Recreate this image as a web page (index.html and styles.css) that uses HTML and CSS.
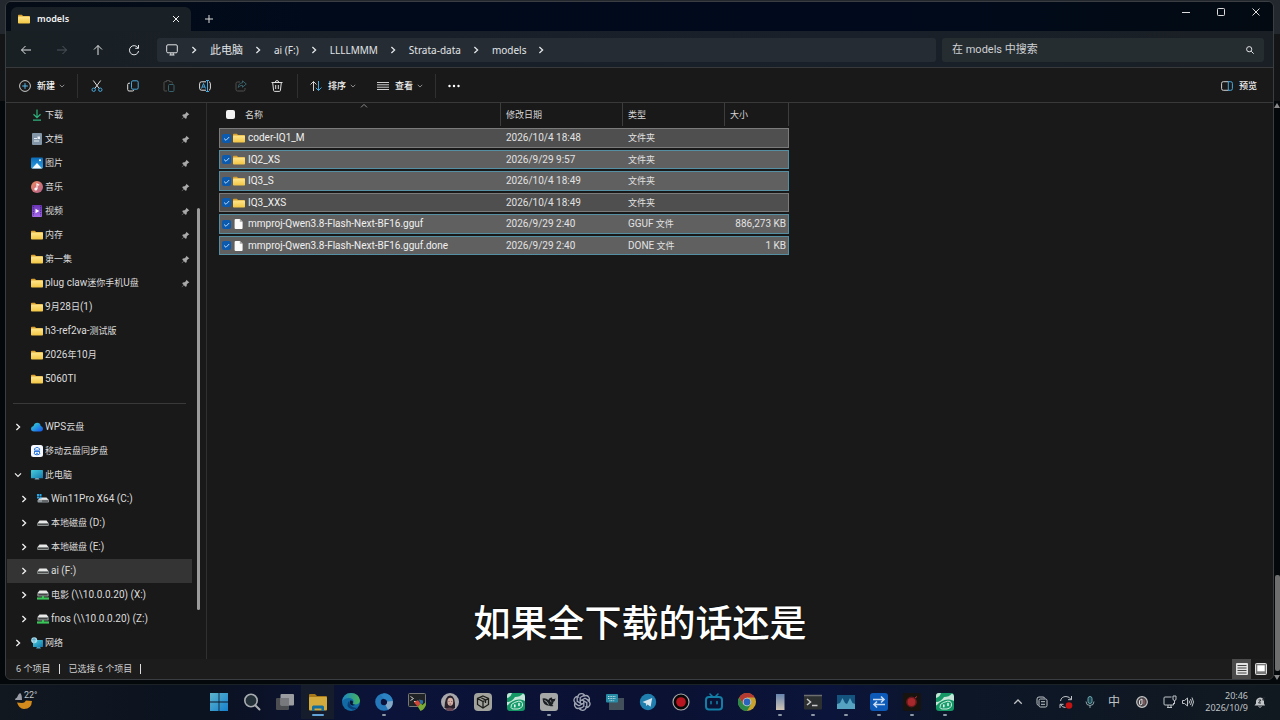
FILE: index.html
```html
<!DOCTYPE html>
<html lang="zh-CN">
<head>
<meta charset="utf-8">
<title>models</title>
<link rel="stylesheet" href="styles.css">
</head>
<body>
<svg class="defs" aria-hidden="true">
  <defs>
    <linearGradient id="gFolder" x1="0" y1="0" x2="0" y2="1"><stop offset="0" stop-color="#ffe58a"/><stop offset="1" stop-color="#f2c543"/></linearGradient>
    <linearGradient id="gPic" x1="0" y1="0" x2="0" y2="1"><stop offset="0" stop-color="#0d6cb8"/><stop offset="1" stop-color="#2a9fe4"/></linearGradient>
    <linearGradient id="gMusic" x1="0" y1="0" x2="1" y2="1"><stop offset="0" stop-color="#ee8a62"/><stop offset="1" stop-color="#b4608c"/></linearGradient>
    <linearGradient id="gVideo" x1="0" y1="0" x2="0" y2="1"><stop offset="0" stop-color="#6a35b5"/><stop offset="1" stop-color="#a56bea"/></linearGradient>
    <linearGradient id="gCloud" x1="0" y1="0" x2="1" y2="1"><stop offset="0" stop-color="#38dcd0"/><stop offset="1" stop-color="#1550ee"/></linearGradient>
    <linearGradient id="gPc" x1="0" y1="0" x2="1" y2="1"><stop offset="0" stop-color="#46cfdc"/><stop offset="1" stop-color="#1477ad"/></linearGradient>
    <linearGradient id="gWin" x1="0" y1="0" x2="1" y2="1"><stop offset="0" stop-color="#5eb4cc"/><stop offset="1" stop-color="#1580cc"/></linearGradient>
    <linearGradient id="gEdge" x1="0" y1="0" x2="1" y2="0"><stop offset="0" stop-color="#1b86c4"/><stop offset="1" stop-color="#46b45c"/></linearGradient>
    <linearGradient id="gPhone" x1="0" y1="0" x2="0" y2="1"><stop offset="0" stop-color="#6784ae"/><stop offset="1" stop-color="#d0c4b4"/></linearGradient>
  </defs>
  <symbol id="folder" viewBox="0 0 12 12"><path d="M0 2.500q0-.8.8-.8h3l1.300 1.200h6q.9 0 .9.8v1H0z" fill="#d9a02c"/><rect y="3.600" width="12" height="7" rx=".8" fill="url(#gFolder)"/></symbol>
  <symbol id="file" viewBox="0 0 12 12"><path d="M2.600 1h4.200l2.800 2.800V10q0 1-1 1h-6q-1 0-1-1V2q0-1 1-1z" fill="#fafafa"/><path d="M6.800 1v2.800h2.800z" fill="#a8a8a8"/></symbol>
  <symbol id="chev" viewBox="0 0 8 8"><path d="M2.400 1 5.600 4 2.400 7" fill="none" stroke="currentColor" stroke-width="1.300"/></symbol>
  <symbol id="chevd" viewBox="0 0 8 8"><path d="M1 2.400 4 5.400 7 2.400" fill="none" stroke="currentColor" stroke-width="1.200"/></symbol>
  <symbol id="chevu" viewBox="0 0 8 8"><path d="M1 5.400 4 2.400 7 5.400" fill="none" stroke="currentColor" stroke-width="1"/></symbol>
  <symbol id="pin" viewBox="0 0 10 10"><path d="M6 .8 9.300 4l-1.400.5-1.500 1.600-.1 2L4.800 8.600 3.300 7 1 9.200.8 9 3 6.700 1.500 5.200 2 3.800l2-.1L5.600 2.200z" fill="#a9a9a9"/></symbol>
  <symbol id="drive" viewBox="0 0 12 12"><path d="M2.500 3.500h7l2.300 3H.2z" fill="#e8e8e8"/><rect x=".2" y="6.200" width="11.600" height="2.800" rx=".8" fill="#8f9495"/><path d="M1 7.400h10" stroke="#303030" stroke-width=".8"/></symbol>
  <symbol id="netdrive" viewBox="0 0 12 12"><path d="M2.500 1.500h7l2 2.500H.5z" fill="#e8e8e8"/><rect x=".3" y="4" width="11.400" height="3.500" rx=".8" fill="#8f9495"/><path d="M1.500 5.800h9" stroke="#222" stroke-width="1"/><path d="M0 9.500h12" stroke="#3bc459" stroke-width="2.200"/><path d="M6 7v2.500" stroke="#3bc459" stroke-width="2"/></symbol>
  <symbol id="robot" viewBox="0 0 18 18"><rect width="18" height="18" rx="3" fill="#149765"/><path d="M0 3Q0 0 3 0h2Q4 4 0 5zM8 4q5 0 8-3.500 2 .8 2 3V8q-3-2-6-1.500Q5 7 1 12l-1 .5V9q5 0 8-5z" fill="#c3e6d8"/><path d="M4 14.500q-.8-3.500 3.500-5l4-1.300q3.300-.8 4 2.300.6 3-1.800 4.500L11 16H6.500Q4.500 16 4 14.500z" fill="#199e6d" stroke="#d4eee3"/><path d="M7.800 12v1.800M12 10.600v1.800" stroke="#e4f6ee" stroke-width="1.600" stroke-linecap="round"/></symbol>
</svg>

<div class="desktop">
<main class="window">
  <header class="titlebar">
    <div class="tab"><svg class="i12"><use href="#folder"/></svg><strong>models</strong>
      <button aria-label="关闭标签"><svg class="i8" viewBox="0 0 8 8"><path d="M1 1l6 6M7 1 1 7" stroke="currentColor"/></svg></button></div>
    <button class="newtab" aria-label="新标签"><svg class="i8" viewBox="0 0 8 8"><path d="M4 0v8M0 4h8" stroke="currentColor"/></svg></button>
    <div class="controls">
      <button aria-label="最小化"><svg class="i8" viewBox="0 0 8 8"><path d="M0 4.500h8" stroke="currentColor"/></svg></button>
      <button aria-label="最大化"><svg class="i8" viewBox="0 0 8 8"><rect x=".5" y=".5" width="7" height="7" rx=".8" fill="none" stroke="currentColor"/></svg></button>
      <button aria-label="关闭"><svg class="i8" viewBox="0 0 8 8"><path d="M.5.5l7 7M7.500.5l-7 7" stroke="currentColor"/></svg></button>
    </div>
  </header>

  <div class="navbar">
    <button class="navbtn" aria-label="后退"><svg class="i12" viewBox="0 0 12 12"><path d="M11 6H1.500M5.500 2l-4 4 4 4" class="ln"/></svg></button>
    <button class="navbtn dim" aria-label="前进" disabled><svg class="i12" viewBox="0 0 12 12"><path d="M1 6h9.500M6.500 2l4 4-4 4" class="ln"/></svg></button>
    <button class="navbtn" aria-label="上一级"><svg class="i12" viewBox="0 0 12 12"><path d="M6 11V1.500M2 5.500l4-4 4 4" class="ln"/></svg></button>
    <button class="navbtn" aria-label="刷新"><svg class="i12" viewBox="0 0 12 12"><path d="M10.200 4.200A4.600 4.600 0 1 0 10.600 7M10.500 1v3.300H7.200" class="ln"/></svg></button>
    <nav class="address" aria-label="地址">
      <svg class="i12" viewBox="0 0 12 12"><rect x=".7" y=".8" width="10.600" height="8" rx="1.200" class="ln"/><path d="M3.500 11h5M4.800 9v2M7.200 9v2" class="ln"/></svg>
      <svg class="i8"><use href="#chev"/></svg><a href="#" class="zh">此电脑</a>
      <svg class="i8"><use href="#chev"/></svg><a href="#">ai (F:)</a>
      <svg class="i8"><use href="#chev"/></svg><a href="#">LLLLMMM</a>
      <svg class="i8"><use href="#chev"/></svg><a href="#">Strata-data</a>
      <svg class="i8"><use href="#chev"/></svg><a href="#">models</a>
      <svg class="i8"><use href="#chev"/></svg>
    </nav>
    <label class="search"><input type="text" placeholder="在 models 中搜索" aria-label="搜索"><svg class="i8" viewBox="0 0 8 8"><circle cx="3.200" cy="3.200" r="2.600" class="ln"/><path d="M5.200 5.200 7.700 7.700" class="ln"/></svg></label>
  </div>

  <div class="toolbar">
    <button class="cmd"><svg class="i12" viewBox="0 0 12 12"><circle cx="6" cy="6" r="5.400" class="ln"/><path d="M6 3.200v5.600M3.200 6h5.600" stroke="#58b6e8"/></svg>新建<svg class="i6"><use href="#chevd"/></svg></button>
    <span class="sep new-sep"></span>
    <button class="icon" aria-label="剪切"><svg class="i12" viewBox="0 0 12 12"><path d="M2.300.5 8.200 8.500M9.700.5 3.800 8.500" class="ln"/><circle cx="2.700" cy="9.700" r="1.700" fill="none" stroke="#4aa8dc"/><circle cx="9.300" cy="9.700" r="1.700" fill="none" stroke="#4aa8dc"/></svg></button>
    <button class="icon" aria-label="复制"><svg class="i12" viewBox="0 0 12 12"><path d="M3 3.200H2q-1.300 0-1.300 1.300v5Q.7 11 2 11h3.500q1.300 0 1.300-1" class="ln"/><rect x="4.500" y=".8" width="6.700" height="8.400" rx="1.400" fill="none" stroke="#4aa8dc"/></svg></button>
    <button class="icon dim" aria-label="粘贴" disabled><svg class="i12" viewBox="0 0 12 12"><path d="M4 11H1.800Q1 11 1 10V2.500q0-.8.8-.8H3.500V.6h3v1.100h2q.8 0 .8.8v1" class="ln"/><rect x="5.500" y="4.500" width="5.500" height="7" rx="1" fill="none" stroke="#38616b"/></svg></button>
    <button class="icon" aria-label="重命名"><svg class="i12" viewBox="0 0 12 12"><path d="M7 1.800H2.500Q.6 1.800.6 3.800v4.400q0 2 1.900 2H7M10 1.800q1.400.3 1.400 2v4.400q0 1.700-1.400 2" class="ln"/><path d="M7 .5h3M8.500.5v11M7 11.500h3M2.500 8.500l2-5 2 5M3.200 7h2.600" stroke="#4aa8dc" fill="none"/></svg></button>
    <button class="icon dim" aria-label="共享" disabled><svg class="i12" viewBox="0 0 12 12"><path d="M5 2H2.500Q1 2 1 3.500v6Q1 11 2.500 11h6q1.500 0 1.500-1.500V8" class="ln"/><path d="M7.500.8 11.300 4 7.500 7.200V5.400Q4.500 5.200 3.300 7.500 3.500 3 7.500 2.800z" fill="none" stroke="#38616b"/></svg></button>
    <button class="icon" aria-label="删除"><svg class="i12" viewBox="0 0 12 12"><path d="M.5 2.500h11M4.300 2.300q0-1.700 1.700-1.700t1.700 1.700M1.700 2.700l.9 7.800q.1.900 1 .9h4.800q.9 0 1-.9l.9-7.800M4.700 5v4M7.300 5v4" class="ln"/></svg></button>
    <span class="sep sort-sep"></span>
    <button class="cmd"><svg class="i12" viewBox="0 0 12 12"><path d="M3.500 11V1.500M.5 4.500l3-3 3 3" class="ln"/><path d="M8.500 1v9.500M5.800 7.800l2.700 2.700 3-3" fill="none" stroke="#4aa8dc"/></svg>排序<svg class="i6"><use href="#chevd"/></svg></button>
    <button class="cmd"><svg class="i12" viewBox="0 0 12 12"><path d="M0 2.500h12M0 4.800h12M0 7.200h12M0 9.500h12" class="ln"/></svg>查看<svg class="i6"><use href="#chevd"/></svg></button>
    <span class="sep"></span>
    <button class="icon" aria-label="更多"><svg class="i12" viewBox="0 0 12 12"><path d="M1.500 6h.01M6 6h.01M10.500 6h.01" stroke="#fff" stroke-width="2.400" stroke-linecap="round"/></svg></button>
    <button class="cmd preview"><svg class="i12" viewBox="0 0 12 12"><path d="M7.500 1.700H2.300Q.6 1.700.6 3.300v5.400q0 1.600 1.700 1.600h5.200" class="ln"/><path d="M7.300 1.700H9.700q1.700 0 1.700 1.600v5.400q0 1.600-1.700 1.600H7.300z" fill="none" stroke="#4aa8dc"/></svg>预览</button>
  </div>

  <div class="body">
    <aside class="side">
      <ul class="tree">
        <li><svg class="i12" viewBox="0 0 12 12"><path d="M6 .5v8M2.500 5.300 6 8.700l3.500-3.400M2 11.200h8" fill="none" stroke="#2fb27e" stroke-width="1.200"/></svg><a href="#">下载</a><svg class="pin"><use href="#pin"/></svg></li>
        <li><svg class="i12" viewBox="0 0 12 12"><rect x="1" width="10" height="12" rx="1" fill="#8396a8"/><path d="M3 5.500h3M3 8h5" stroke="#e6edf4" stroke-width="1.200"/><rect x="6.500" y="3.500" width="2.500" height="2.500" fill="#e6edf4"/></svg><a href="#">文档</a><svg class="pin"><use href="#pin"/></svg></li>
        <li><svg class="i12" viewBox="0 0 12 12"><rect y=".5" width="12" height="11" rx="1" fill="url(#gPic)"/><path d="M1 11.500 6 6l5 5.500z" fill="#f4faff"/><circle cx="9" cy="3.300" r="1" fill="#fff"/></svg><a href="#">图片</a><svg class="pin"><use href="#pin"/></svg></li>
        <li><svg class="i12" viewBox="0 0 12 12"><circle cx="6" cy="6" r="6" fill="url(#gMusic)"/><circle cx="4.800" cy="8" r="1.500" fill="#fff"/><path d="M6 8V3l2.200 1.200" stroke="#fff" stroke-width="1.100" fill="none"/></svg><a href="#">音乐</a><svg class="pin"><use href="#pin"/></svg></li>
        <li><svg class="i12" viewBox="0 0 12 12"><rect x="1" width="10" height="12" rx="1" fill="url(#gVideo)"/><path d="M2.300 1v10M9.700 1v10" stroke="#40207c" stroke-dasharray="1.200 1.200"/><path d="M4.500 3.800 8.300 6 4.500 8.200z" fill="#fff"/></svg><a href="#">视频</a><svg class="pin"><use href="#pin"/></svg></li>
        <li><svg class="i12"><use href="#folder"/></svg><a href="#">内存</a><svg class="pin"><use href="#pin"/></svg></li>
        <li><svg class="i12"><use href="#folder"/></svg><a href="#">第一集</a><svg class="pin"><use href="#pin"/></svg></li>
        <li><svg class="i12"><use href="#folder"/></svg><a href="#"><span class="en">plug claw</span>迷你手机<span class="en">U</span>盘</a><svg class="pin"><use href="#pin"/></svg></li>
        <li><svg class="i12"><use href="#folder"/></svg><a href="#"><span class="en">9</span>月<span class="en">28</span>日<span class="en">(1)</span></a></li>
        <li><svg class="i12"><use href="#folder"/></svg><a href="#"><span class="en">h3-ref2va-</span>测试版</a></li>
        <li><svg class="i12"><use href="#folder"/></svg><a href="#"><span class="en">2026</span>年<span class="en">10</span>月</a></li>
        <li><svg class="i12"><use href="#folder"/></svg><a href="#"><span class="en">5060TI</span></a></li>
        <li class="rule" role="separator"></li>
        <li class="node"><button aria-label="展开"><svg class="i8"><use href="#chev"/></svg></button><svg class="i12" viewBox="0 0 12 12"><path d="M3 10.500Q0 10.300 0 7.700 0 5.500 2.500 5 3.500 1.800 6.300 1.800q2.900 0 3.400 3.200 2.300.5 2.300 2.800 0 2.500-2.800 2.700z" fill="url(#gCloud)"/></svg><a href="#"><span class="en">WPS</span>云盘</a></li>
        <li><svg class="i12" viewBox="0 0 12 12"><rect width="12" height="12" rx="2.500" fill="#f5f9ff"/><path d="M3.500 5.200q-.7-2 1.300-2.200Q6 1.500 7.400 3q1.800.2 1.200 2.200zM3 6.500h6M4.500 6.500 3 8q0 1.800 3 1.800T9 8L7.500 6.500M5 8.300h2" fill="none" stroke="#2f78dc"/></svg><a href="#">移动云盘同步盘</a></li>
        <li class="node"><button aria-label="折叠"><svg class="i8"><use href="#chevd"/></svg></button><svg class="i12" viewBox="0 0 12 12"><rect y="1" width="12" height="8.300" rx=".6" fill="url(#gPc)"/><path d="M3.500 10.500h5L7.500 9h-3z" fill="#7fa2b0"/></svg><a href="#">此电脑</a></li>
        <li class="node sub"><button aria-label="展开"><svg class="i8"><use href="#chev"/></svg></button><svg class="i12" viewBox="0 0 12 12"><path d="M3 4.500h6.500l2.300 2.500H1z" fill="#e8e8e8"/><rect x=".5" y="6.700" width="11.500" height="2.800" rx=".8" fill="#90979b"/><path d="M5 8h6" stroke="#222" stroke-width=".8"/><path d="M0 1h2v2H0zM2.500 1h2v2h-2zM0 3.500h2v2H0zM2.500 3.500h2v2h-2z" fill="#27a5e9"/></svg><a href="#" class="en">Win11Pro X64 (C:)</a></li>
        <li class="node sub"><button aria-label="展开"><svg class="i8"><use href="#chev"/></svg></button><svg class="i12"><use href="#drive"/></svg><a href="#">本地磁盘 <span class="en">(D:)</span></a></li>
        <li class="node sub"><button aria-label="展开"><svg class="i8"><use href="#chev"/></svg></button><svg class="i12"><use href="#drive"/></svg><a href="#">本地磁盘 <span class="en">(E:)</span></a></li>
        <li class="node sub current"><button aria-label="展开"><svg class="i8"><use href="#chev"/></svg></button><svg class="i12"><use href="#drive"/></svg><a href="#" class="en">ai (F:)</a></li>
        <li class="node sub"><button aria-label="展开"><svg class="i8"><use href="#chev"/></svg></button><svg class="i12"><use href="#netdrive"/></svg><a href="#">电影 <span class="en">(\\10.0.0.20) (X:)</span></a></li>
        <li class="node sub"><button aria-label="展开"><svg class="i8"><use href="#chev"/></svg></button><svg class="i12"><use href="#netdrive"/></svg><a href="#" class="en">fnos (\\10.0.0.20) (Z:)</a></li>
        <li class="node"><button aria-label="展开"><svg class="i8"><use href="#chev"/></svg></button><svg class="i12" viewBox="0 0 12 12"><rect x="2" y="3" width="10" height="7" rx=".6" fill="url(#gPc)"/><path d="M5 11.500h5L9 10H6z" fill="#4a9fc0"/><circle cx="3.200" cy="3.200" r="3" fill="#a8dcec"/><path d="M1 3q2-2 4 0M3 .5v5" stroke="#4699bd" stroke-width=".7" fill="none"/></svg><a href="#">网络</a></li>
      </ul>
      <div class="thumb"></div>
    </aside>

    <section class="files">
      <table>
        <colgroup><col class="c-name"><col class="c-date"><col class="c-type"><col class="c-size"></colgroup>
        <thead><tr>
          <th><div class="cell"><input type="checkbox" aria-label="全选">名称<svg class="i8 asc"><use href="#chevu"/></svg></div></th>
          <th>修改日期</th><th>类型</th><th>大小</th>
        </tr></thead>
        <tbody>
          <tr class="soft"><td><label class="cell"><input type="checkbox" checked><svg class="i12"><use href="#folder"/></svg>coder-IQ1_M</label></td><td>2026/10/4 18:48</td><td class="zh">文件夹</td><td></td></tr>
          <tr><td><label class="cell"><input type="checkbox" checked><svg class="i12"><use href="#folder"/></svg>IQ2_XS</label></td><td>2026/9/29 9:57</td><td class="zh">文件夹</td><td></td></tr>
          <tr><td><label class="cell"><input type="checkbox" checked><svg class="i12"><use href="#folder"/></svg>IQ3_S</label></td><td>2026/10/4 18:49</td><td class="zh">文件夹</td><td></td></tr>
          <tr class="soft"><td><label class="cell"><input type="checkbox" checked><svg class="i12"><use href="#folder"/></svg>IQ3_XXS</label></td><td>2026/10/4 18:49</td><td class="zh">文件夹</td><td></td></tr>
          <tr><td><label class="cell"><input type="checkbox" checked><svg class="i12"><use href="#file"/></svg>mmproj-Qwen3.8-Flash-Next-BF16.gguf</label></td><td>2026/9/29 2:40</td><td class="zh"><span class="en">GGUF</span> 文件</td><td>886,273 KB</td></tr>
          <tr><td><label class="cell"><input type="checkbox" checked><svg class="i12"><use href="#file"/></svg>mmproj-Qwen3.8-Flash-Next-BF16.gguf.done</label></td><td>2026/9/29 2:40</td><td class="zh"><span class="en">DONE</span> 文件</td><td>1 KB</td></tr>
        </tbody>
      </table>
    </section>
  </div>

  <footer class="status">
    <span>6 个项目</span><span>已选择 6 个项目</span>
    <div class="views">
      <button class="on" aria-label="详细信息"><svg class="i12" viewBox="0 0 12 12"><rect width="12" height="12" rx="1" fill="#e2e2e2"/><path d="M1.500 2.500h9M1.500 5h9M1.500 7.500h9M1.500 10h9" stroke="#444"/></svg></button>
      <button aria-label="大图标"><svg class="i12" viewBox="0 0 12 12"><rect x=".5" y=".5" width="11" height="11" rx="1" fill="#777" stroke="#ddd"/><rect x="2.300" y="2.300" width="7.400" height="6" fill="#fff"/></svg></button>
    </div>
  </footer>
</main>
<div class="behind"><i class="up"></i><i class="bar"></i><i class="down"></i></div>
</div>

<p class="caption">如果全下载的话还是</p>

<footer class="taskbar">
  <button class="weather"><svg class="i20" viewBox="0 0 20 20"><path d="M0 9q0-2 2-2.500Q3 3 5 2q2 1 2 7z" fill="#9a9ca6"/><path d="M2 11.500 7 12q2.500 0 4-2.500l6 .5q-.5 8-8 8-5 0-7-6.500z" fill="#d28a1c"/></svg><span>22°</span></button>
  <div class="apps">
    <button aria-label="开始"><svg viewBox="0 0 18 18"><path d="M0 0h8.600v8.600H0zM9.400 0H18v8.600H9.400zM0 9.400h8.600V18H0zM9.400 9.400H18V18H9.400z" fill="url(#gWin)"/></svg></button>
    <button aria-label="搜索"><svg viewBox="0 0 18 18"><circle cx="8" cy="7.500" r="6.200" fill="#243038" stroke="#a9adb1" stroke-width="1.600"/><path d="m12.500 12.500 4 4" stroke="#a9adb1" stroke-width="2" stroke-linecap="round"/></svg></button>
    <button aria-label="任务视图"><svg viewBox="0 0 18 18"><rect y="5" width="13" height="12" rx="1" fill="#4b4d51"/><rect x="4.500" y="1" width="13.500" height="11.500" rx="1" fill="#9a9ca0"/><path d="M4.500 5H13v7.500H4.500z" fill="#77797d"/></svg></button>
    <button class="active" aria-label="文件资源管理器"><svg viewBox="0 0 18 18"><path d="M0 2q0-1 1-1h5l2 2h9q1 0 1 1v3H0z" fill="#a87918"/><rect y="4" width="18" height="13.500" rx="1" fill="#d3aa3c"/><path d="M3 18v-4q0-1.500 1.500-1.500h9q1.500 0 1.500 1.500v4h-2.500v-2.500h-7V18z" fill="#126f9e"/></svg></button>
    <button aria-label="Edge"><svg viewBox="0 0 18 18"><circle cx="9" cy="9" r="9" fill="#126aa4"/><path d="M.2 8.500Q1 0 9 0t9 7.500q-.3 4-5 4-2 0-2-1.200 1-1 .5-2.500Q10.500 5 7 5 2 5 .2 8.500z" fill="url(#gEdge)"/><path d="M7 8q-4 5 2 8 4 1.500 7-1.500-4 1-7-1.500Q7.500 11 7 8z" fill="#0a3e78"/><path d="M8 7.500q3-.5 3 1.500 0 1-.5 1.500.5 1.500 3 1.200-3 1.500-5-.2Q7.500 10 8 7.500z" fill="#0b1534"/></svg></button>
    <button class="run" aria-label="浏览器"><svg viewBox="0 0 18 18"><circle cx="9" cy="9" r="6" fill="none" stroke="#2477b8" stroke-width="5.600"/><path d="M9 .2A8.800 8.800 0 0 1 17.800 8L12 8Q11 6 9 6L6 2z" fill="#2c83c4"/><path d="M17.800 8A8.800 8.800 0 0 1 13 16.800L10.500 12Q12.500 11 12 8.500z" fill="#86a9c8"/></svg></button>
    <button aria-label="终端工具"><svg viewBox="0 0 18 18"><rect x=".5" y=".5" width="17" height="13" rx="1" fill="#202326" stroke="#777"/><path d="m2.500 3.500 3 2-3 2M6 8.500h3" stroke="#ccc" fill="none"/><path d="M6 9.500 10 7l2.500 3.500L10 14z" fill="#cf4436"/><path d="m10 14 2.500-4 2 2L18 9q0 7-5.500 9z" fill="#79ad35"/><path d="m11 6.500 4 1v3l-2.500.5z" fill="#2971a5"/></svg></button>
    <button aria-label="头像"><svg viewBox="0 0 18 18"><circle cx="9" cy="9" r="9" fill="#a9a8ac"/><path d="M3.500 15Q4 2 9.500 2.500q5 .5 4.500 12.500l-4 2z" fill="#29202a"/><ellipse cx="9.300" cy="8.700" rx="2.900" ry="4" fill="#d4afa4"/><path d="M4.500 16.500q4-4 8.500 0-4 3-8.500 0z" fill="#654553"/><path d="M7.500 8.500h1M10.200 8.500h1M8.500 11h1.600" stroke="#613742" stroke-width=".7"/></svg></button>
    <button aria-label="方块"><svg viewBox="0 0 18 18"><rect width="18" height="18" rx="4" fill="#a2a39d"/><path d="m9 3 5.500 2.500v6L9 15l-5.500-3.500v-6zM3.500 5.500 9 8.500l5.500-3M9 8.500V15M6.200 4.200 11.500 7v3" fill="none" stroke="#1c1d1b" stroke-width="1.300"/></svg></button>
    <button aria-label="助手"><svg><use href="#robot"/></svg></button>
    <button class="run" aria-label="鲸鱼"><svg viewBox="0 0 18 18"><rect width="18" height="18" rx="3" fill="#a6a7a7"/><path d="M2.500 5.500q3-1 6 1.500Q9 4.500 12 4.500l.3 1.500q1.700.3 3.200-.8-.2 2.800-2 3.600 0 1.800-1.300 3l1.300 1.200q-2.500.8-4-.2Q3 13 2.500 5.500z" fill="#1c2024"/><path d="M4.500 7.500q2 0 4 4M10 7.500l1.300 1.200" stroke="#aaa" fill="none"/></svg></button>
    <button aria-label="ChatGPT"><svg viewBox="0 0 18 18"><g fill="none" stroke="#a3a8b6" stroke-width="1.300"><path id="knot" d="M5 5V3.500Q5.500.7 8.500.7q1.700 0 3 1.300L7.200 4.500v6"/><use href="#knot" transform="rotate(60 9 9)"/><use href="#knot" transform="rotate(120 9 9)"/><use href="#knot" transform="rotate(180 9 9)"/><use href="#knot" transform="rotate(240 9 9)"/><use href="#knot" transform="rotate(300 9 9)"/></g></svg></button>
    <button aria-label="键盘"><svg viewBox="0 0 18 18"><rect x="3" y="5" width="15" height="12" fill="#41505b"/><rect y="1" width="12" height="8.500" rx="1" fill="#288ba6"/><path d="M2 3.500h8M2 5.500h8M3.500 7.700h5" stroke="#bddce4" stroke-dasharray="1 .6"/></svg></button>
    <button aria-label="Telegram"><svg viewBox="0 0 18 18"><circle cx="9" cy="9" r="8.200" fill="#207eae"/><path d="m3.500 9 9.700-4-1.600 8.700-3-2.200-1.500 1.400V10.500z" fill="#d9e6ed"/></svg></button>
    <button aria-label="录制"><svg viewBox="0 0 18 18"><circle cx="9" cy="9" r="8" fill="#080808" stroke="#aaa" stroke-width="1.200"/><circle cx="9" cy="9" r="4.800" fill="#b81521"/></svg></button>
    <button aria-label="哔哩哔哩"><svg viewBox="0 0 18 18"><rect x="1" y="4" width="16" height="12.500" rx="3" fill="none" stroke="#137da5" stroke-width="2"/><path d="m5 1 2.500 2.500M13 1l-2.500 2.500M6 8.500v2.200M12 8.500v2.200" stroke="#137da5" stroke-width="1.600" stroke-linecap="round"/></svg></button>
    <button aria-label="Chrome"><svg viewBox="0 0 18 18"><circle cx="9" cy="9" r="9" fill="#c8a42e"/><path d="M1.200 4.500A9 9 0 0 1 16.800 4.500H9L5.100 11.200z" fill="#b53a31"/><path d="M1.200 4.500A9 9 0 0 0 9 18l3.900-6.700H5.100z" fill="#2c8848"/><circle cx="9" cy="9" r="4.300" fill="#c9d2d9"/><circle cx="9" cy="9" r="3.400" fill="#2a65bd"/></svg></button>
    <button class="run" aria-label="手机"><svg viewBox="0 0 18 18"><rect x="5" y="1" width="8.500" height="16" fill="url(#gPhone)"/></svg></button>
    <button class="run" aria-label="终端"><svg viewBox="0 0 18 18"><rect y="2" width="18" height="14.500" rx="1" fill="#2d3031"/><path d="M0 2.500h18" stroke="#6c6e6f" stroke-width="1.500"/><path d="m3 6 3.500 3L3 12M8 12.500h5.500" stroke="#c9c9c9" stroke-width="1.500" fill="none"/></svg></button>
    <button class="run" aria-label="监视器"><svg viewBox="0 0 18 18"><rect y="2" width="18" height="14" fill="#14537d"/><path d="M0 16v-5l3-1 2.500-5L8 10l2 1 3-6 2.500 5 2.500 1v5z" fill="#55a3c0"/></svg></button>
    <button class="run" aria-label="传输"><svg viewBox="0 0 18 18"><rect width="18" height="18" rx="3" fill="#0c59b8"/><path d="M3 6.500h11M11 3.500l3 3-3 3M15 11.500H4M7 8.500l-3 3 3 3" fill="none" stroke="#c9dcf0" stroke-width="1.600"/></svg></button>
    <button class="run" aria-label="录屏"><svg viewBox="0 0 18 18"><rect width="18" height="18" rx="2" fill="#17130f"/><circle cx="8.500" cy="9" r="4.700" fill="#a8282c" stroke="#631a1d" stroke-width="1.500"/><path d="m12 5 2-1.500" stroke="#ba3333"/></svg></button>
    <button class="run" aria-label="助手窗口"><svg><use href="#robot"/></svg></button>
  </div>
  <div class="tray">
    <button aria-label="显示隐藏图标"><svg class="i10"><use href="#chevu"/></svg></button>
    <button aria-label="剪贴板"><svg class="i12" viewBox="0 0 12 12"><path d="M2.500 9.500Q1 9 1 7.500V3Q1 1 3 1h4q1.500 0 2 1.500" class="ln"/><rect x="3" y="3" width="8" height="8" rx="1.500" class="ln"/><path d="M5 5.700h4M5 8.300h4" class="ln"/></svg></button>
    <button aria-label="同步"><svg class="i14" viewBox="0 0 14 14"><path d="M1.500 6Q2.300 1.500 7 1.500q3.500 0 5 3M12.500 1v3.700H9M1 13V9.300h3.500M1.500 9.500q1.500 3 5 3" class="ln"/><circle cx="10" cy="10.500" r="3.300" fill="#c41313"/></svg></button>
    <button aria-label="麦克风"><svg class="i12" viewBox="0 0 12 12"><rect x="4" y=".5" width="4" height="7" rx="2" fill="#1f4a53" stroke="#6ba6b0"/><path d="M2 5.500q0 4 4 4t4-4M6 9.500v2.500" fill="none" stroke="#8da5ab"/></svg></button>
    <button class="ime">中</button>
    <button aria-label="输入法"><svg class="i12" viewBox="0 0 12 12"><circle cx="6" cy="6" r="5.300" fill="#494449" stroke="#c5c5c5" stroke-width="1.200"/><path d="M3.500 8.500V4.500L6 3v5.200L4 9" stroke="#ddd" fill="none"/><path d="M8 3.500v5" stroke="#b6656a"/></svg></button>
    <button class="net" aria-label="网络"><svg class="i14" viewBox="0 0 14 14"><path d="M8.500 2H2Q1 2 1 3v6q0 1 1 1h8.500V8M4 12.500h5M5 10v2.500M8 10v2.500M10 1h3v3q0 1.500-1.500 1.500T10 4zM11.500 5.500V9" class="ln"/></svg></button>
    <button class="vol" aria-label="音量"><svg class="i12" viewBox="0 0 12 12"><path d="M.5 4.500h2L5.500 2v8L2.500 7.500h-2zM7 4.500q1 1.500 0 3M8.500 3q2 3 0 6M10 1.500q3 4.500 0 9" class="ln"/></svg></button>
    <time>20:46<br>2026/10/9</time>
    <button class="bell" aria-label="通知"><svg class="i12" viewBox="0 0 12 12"><path d="M.5 9.500 2 7.500V5q.5-3 4-3.500 3.500 0 4 3.500v2.500l1 2z" fill="#c3c6c8"/><path d="M4.500 10.500q1.500 1.500 3 0" stroke="#c3c6c8"/><path d="M4.500 4h2.500L4.500 7H7M8.500 1.500h2.500L8.500 4H11" stroke="#20262a" stroke-width=".9" fill="none"/></svg></button>
  </div>
</footer>
</body>
</html>
```
FILE: styles.css
```css
* { box-sizing: border-box; }
html, body { height: 100%; }
body {
  margin: 0;
  display: flex;
  flex-direction: column;
  overflow: hidden;
  position: relative;
  background: #06090c;
  color: #dcdcdc;
  font: 10px/16px Roboto, "Noto Sans CJK SC", sans-serif;
}
button {
  background: none;
  border: 0;
  padding: 0;
  margin: 0;
  color: inherit;
  font: inherit;
  display: flex;
  align-items: center;
  justify-content: center;
}
a { color: inherit; text-decoration: none; white-space: nowrap; }
svg { display: block; flex: none; }
.defs { position: absolute; width: 0; height: 0; }
.ln { fill: none; stroke: currentColor; stroke-width: 1; }
.i6 { width: 6px; height: 6px; }
.i8 { width: 8px; height: 8px; }
.i10 { width: 10px; height: 10px; }
.i12 { width: 12px; height: 12px; }
.i14 { width: 14px; height: 14px; }
.i20 { width: 20px; height: 20px; }

.desktop {
  flex: 1;
  min-height: 0;
  display: flex;
  padding: 1px 0 4px 5px;
  background: linear-gradient(#23282e 34px, #141516 34px, #141516 101px, #04080b 101px);
}
.window {
  flex: 1;
  min-width: 0;
  display: flex;
  flex-direction: column;
  border: 1px solid #3a3e42;
  border-radius: 6px;
  overflow: hidden;
  background: #191919;
}

.titlebar {
  flex: none;
  height: 29px;
  display: flex;
  align-items: flex-end;
  padding-left: 5px;
  background: linear-gradient(90deg, #050c16, #000a1b 25%, #000a1c 70%, #030a12);
}
.tab {
  width: 180px;
  height: 24px;
  display: flex;
  align-items: center;
  gap: 7px;
  padding: 0 11px 0 7px;
  border-radius: 6px 6px 0 0;
  background: #1a2126;
  color: #f2f2f2;
}
.tab strong { font: 600 9px/16px "Noto Sans", sans-serif; }
.tab button { margin-left: auto; }
.newtab { width: 36px; height: 24px; }
.controls { margin-left: auto; align-self: flex-start; display: flex; }
.controls button { width: 35px; height: 20px; }

.navbar {
  flex: none;
  height: 36px;
  display: flex;
  align-items: center;
  padding: 1px 9px 0 2px;
  background: linear-gradient(90deg, #192024, #191f28 30%, #192029 70%, #191f24);
  color: #e2e4e6;
}
.navbtn { width: 36px; height: 24px; }
.dim { color: #50575d; }
.address, .search {
  height: 24px;
  display: flex;
  align-items: center;
  border-radius: 3px;
  background: #252c34;
}
.address { flex: 1; min-width: 0; margin-left: 5px; padding-left: 9px; gap: 12px; font-family: "Noto Sans", "Noto Sans CJK SC", sans-serif; }
.address .zh { font-size: 11px; }
.address a + svg { margin-left: -1px; }
.search { flex: 0 1 322px; margin-left: 6px; padding: 0 10px; background: #262d31; }
.search input {
  flex: 1;
  min-width: 0;
  border: 0;
  padding: 0;
  outline: 0;
  background: none;
  color: inherit;
  font: inherit;
  font-size: 11px;
}
.search input::placeholder { color: #ced1d4; opacity: 1; }

.toolbar {
  flex: none;
  height: 36px;
  display: flex;
  align-items: center;
  padding: 1px 16px 0 13px;
  border: solid #37393b;
  border-width: 1px 0;
  color: #dedede;
}
.cmd { gap: 6px; font-size: 9px; font-weight: 500; color: #f2f2f2; }
.cmd .i12 { color: #cfcfcf; }
.cmd .i6 { color: #999; margin-left: -2px; }
.cmd + .cmd { margin-left: 21px; }
.icon { width: 36px; height: 28px; }
.icon.dim { color: #505050; }
.sep { width: 1px; height: 24px; background: #303030; margin-left: 12px; }
.new-sep { margin-right: 1px; }
.sort-sep { margin: 0 12px 0 2px; }
.preview { margin-left: auto; }

.body { flex: 1; min-height: 0; display: flex; }
.side {
  width: 201px;
  flex: none;
  display: flex;
  padding: 0 6px 0 1px;
  border-right: 1px solid #303030;
}
.tree { flex: 1; margin: 0; padding: 0; list-style: none; overflow: hidden; font-size: 9px; }
.tree li { height: 24px; display: flex; align-items: center; gap: 2px; padding: 0 2px 0 24px; }
.tree .node { padding-left: 5px; }
.tree .sub { padding-left: 11px; }
.tree .current { background: #343434; }
.tree button { width: 12px; height: 16px; margin-right: 5px; color: #f0f0f0; }
.tree .rule::before { content: ""; flex: 1; height: 1px; margin-left: -18px; margin-right: 4px; background: #393939; }
.en { font-size: 10px; }
.pin { width: 9px; height: 9px; margin-left: auto; }
.thumb { width: 3px; height: 402px; margin: 105px 0 0 5px; border-radius: 2px; background: #9b9b9b; }

.files { flex: 1; min-width: 0; padding-left: 12px; }
table { width: 570px; table-layout: fixed; border-collapse: separate; border-spacing: 0 2px; margin-top: -2px; }
.c-name { width: 282px; }
.c-date { width: 122px; }
.c-type { width: 102px; }
th { height: 23px; }
tbody td { height: 20px; }
tbody tr:nth-child(even) td { height: 19px; }
th, td { padding: 0 4px 0 5px; text-align: left; font-weight: 400; line-height: 16px; white-space: nowrap; }
th { font-size: 9px; border-right: 1px solid #3d3d3d; color: #d6d6d6; }
.cell { display: flex; align-items: center; }
th .cell { padding-left: 2px; gap: 10px; position: relative; }
.asc { position: absolute; left: 136px; top: -5px; color: #8c8c8c; }
input[type="checkbox"] { appearance: none; width: 9px; height: 9px; margin: 0; border-radius: 2px; background: #f2f2f2; flex: none; }
td input[type="checkbox"] {
  background: #0c5aae url("data:image/svg+xml,%3Csvg xmlns='http://www.w3.org/2000/svg' viewBox='0 0 9 9'%3E%3Cpath d='M2 4.500 4 6.300 7.200 3' fill='none' stroke='%23b5d7f7'/%3E%3C/svg%3E");
}
td .i12 { margin: 0 3px 0 2px; }
td { background: #606060; border: solid #548fa3; border-width: 1px 0; color: #e2e2e2; }
.soft td { background: #4f4f4f; border-color: #7b7b7b; }
td:first-child { border-left-width: 1px; padding-left: 2px; color: #f0f0f0; }
td:last-child { border-right-width: 1px; text-align: right; padding-right: 2px; }
td.zh { font-size: 9px; }

.status { flex: none; height: 20px; display: flex; align-items: center; padding-left: 10px; font: 9px/16px "Noto Sans", "Noto Sans CJK SC", sans-serif; background: #1c1c1c; color: #cfcfcf; }
.status > span { line-height: 10px; padding-right: 8px; margin-right: 9px; border-right: 1px solid #ddd; }
.views { margin-left: auto; display: flex; padding-right: 3px; }
.views button { width: 19px; height: 20px; }
.views .on { background: #4b4b4b; }

.behind { width: 6px; display: flex; flex-direction: column; align-items: center; padding-top: 102px; }
.behind i { display: block; }
.behind .bar { width: 5px; height: 96px; border-radius: 2px; background: #6e6e6e; margin-top: auto; }
.up, .down { border: solid transparent; border-width: 0 3px; }
.behind .up { border-bottom: 5px solid #8a8a8a; }
.behind .down { border-top: 5px solid #8a8a8a; margin-top: 4px; }

.caption {
  position: absolute;
  left: 0;
  right: 0;
  bottom: 72px;
  margin: 0;
  text-align: center;
  font: 500 37px/54px "Noto Sans CJK SC", sans-serif;
  color: #fff;
  text-shadow: 0 0 2px #000;
  pointer-events: none;
}

.taskbar {
  flex: none;
  height: 36px;
  display: flex;
  padding-bottom: 1px;
  border-top: 1px solid #1b2226;
  background: linear-gradient(90deg, #111820, #0b1220 16%, #0b133a 30%, #0a1132 50%, #0b143a 65%, #0c1627 75%, #111920);
  color: #bfc3c6;
}
.weather { flex: 0 0 202px; justify-content: flex-start; padding-left: 15px; font-size: 9px; align-items: flex-start; }
.weather .i20 { margin-top: 6px; }
.weather span { margin-left: -11px; line-height: 20px; }
.apps { display: flex; }
.apps button { width: 33px; position: relative; }
.apps svg { width: 18px; height: 18px; }
.apps .run::after, .apps .active::after {
  content: "";
  position: absolute;
  bottom: 3px;
  left: 50%;
  width: 4px;
  margin-left: -2px;
  height: 2px;
  border-radius: 1px;
  background: #8e98a6;
}
.apps .active { background: #151c2b; }
.apps .active::after { width: 12px; margin-left: -6px; background: #62a3d8; }
.tray { display: flex; margin-left: auto; padding-right: 11px; align-items: center; }
.tray button { width: 24px; height: 100%; }
.tray .ime { font-size: 12px; margin-right: 4px; }
.tray .net { width: 18px; margin-left: 7px; }
.tray .vol { width: 17px; }
.tray .bell { width: 18px; margin-left: 3px; }
.tray time { width: 52px; text-align: right; font: 9px/12px "Noto Sans", sans-serif; }
```
